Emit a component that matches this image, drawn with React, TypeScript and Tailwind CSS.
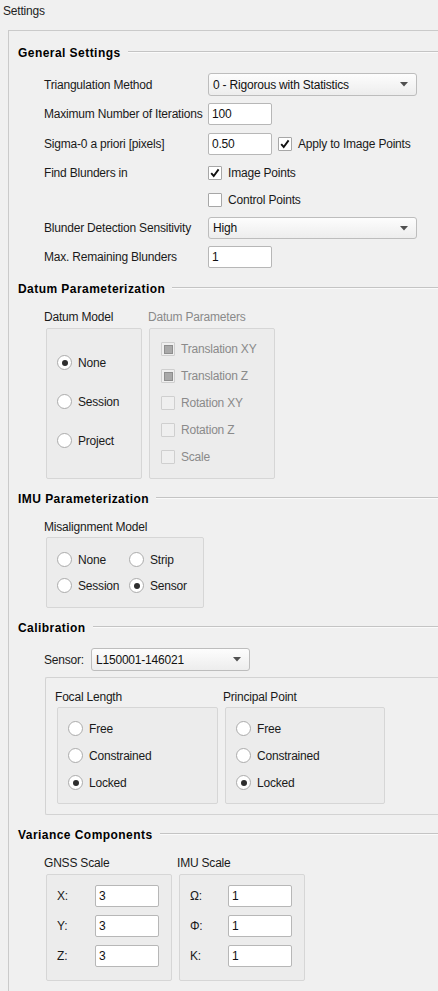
import React from "react";

const Header = ({ title, className = "" }: { title: string; className?: string }) => (
  <div className={`flex h-[16px] items-center gap-[7px] ${className}`}>
    <span className="text-[12px] font-bold tracking-[0.45px] text-black">{title}</span>
    <div className="mt-[-2px] h-[2px] flex-1 border-t border-b border-t-[#c4c4c4] border-b-[#fafafa]" />
  </div>
);

const Check = ({ checked = false, label, disabled = false, partial = false }: { checked?: boolean; label: string; disabled?: boolean; partial?: boolean }) => (
  <div className="flex h-[14px] items-center">
    <span
      className={`flex h-[14px] w-[14px] items-center justify-center rounded-[1px] border ${
        disabled ? "border-[#cfcfcf] bg-[#efefef]" : "border-[#a7a7a7] bg-white"
      }`}
    >
      {checked && (
        <svg width="12" height="12" viewBox="0 0 12 12">
          <path d="M2.2 6.2 L4.7 9 L9.6 2.4" fill="none" stroke="#111" strokeWidth="1.9" />
        </svg>
      )}
      {partial && <span className="h-[9px] w-[9px] border border-[#8e8e8e] bg-[#a9a9a9]" />}
    </span>
    <span className={`ml-[6px] whitespace-nowrap ${disabled ? "text-[#8a8a8a]" : "text-[#1a1a1a]"}`}>{label}</span>
  </div>
);

const Radio = ({ checked = false, label }: { checked?: boolean; label: string }) => (
  <div className="flex h-[15px] items-center">
    <span className="flex h-[15px] w-[15px] items-center justify-center rounded-full border border-[#ababab] bg-white">
      {checked && <span className="h-[6px] w-[6px] rounded-full bg-[#2e2e2e]" />}
    </span>
    <span className="ml-[6px] whitespace-nowrap text-[#1a1a1a]">{label}</span>
  </div>
);

const Field = ({ value, className = "w-[64px]" }: { value: string; className?: string }) => (
  <div className={`flex h-[22px] items-center rounded-[2px] border border-[#b7b7b7] bg-white px-[3px] text-[#111] ${className}`}>
    {value}
  </div>
);

const Combo = ({ value, className = "" }: { value: string; className?: string }) => (
  <div
    className={`flex h-[23px] items-center justify-between rounded-[3px] border border-[#bdbdbd] bg-gradient-to-b from-[#fdfdfd] to-[#ededed] pl-[4px] pr-[8px] text-[#111] ${className}`}
  >
    <span className="whitespace-nowrap">{value}</span>
    <svg width="8" height="5" viewBox="0 0 8 5">
      <path d="M0 0 H8 L4 4.5 Z" fill="#505050" />
    </svg>
  </div>
);

const Box = ({ className = "", children }: { className?: string; children: React.ReactNode }) => (
  <div className={`rounded-[2px] border border-[#d6d6d6] bg-[#ececec] ${className}`}>{children}</div>
);

const Row = ({ label, className = "", children }: { label: string; className?: string; children?: React.ReactNode }) => (
  <div className={`flex items-center ${className}`}>
    <span className="w-[164px] shrink-0 whitespace-nowrap text-[#1a1a1a]">{label}</span>
    {children}
  </div>
);

const ScaleRow = ({ label, value }: { label: string; value: string }) => (
  <div className="flex h-[22px] items-center">
    <span className="w-[38px] text-[#1a1a1a]">{label}</span>
    <Field value={value} />
  </div>
);

export default function App() {
  return (
    <div className="h-[991px] w-[438px] overflow-hidden bg-[#f0f0f0] font-['Liberation_Sans',Arial,sans-serif] text-[12px] leading-[16px] tracking-[-0.2px] text-black">
      <div className="flex h-[22px] items-center pl-[3px] text-[#222]">Settings</div>

      {/* outer frame, runs off the right and bottom edge */}
      <div className="ml-[8px] mt-[8px] h-[980px] w-[460px] border-l border-t border-[#cacaca] pl-[9px]">
        <Header title="General Settings" className="mt-[14px]" />
        <div className="pl-[26px]">
          <Row label="Triangulation Method" className="mt-[12px] h-[23px]">
            <Combo value="0 - Rigorous with Statistics" className="w-[209px]" />
          </Row>
          <Row label="Maximum Number of Iterations" className="mt-[7px] h-[22px]">
            <Field value="100" />
          </Row>
          <Row label="Sigma-0 a priori [pixels]" className="mt-[8px] h-[22px]">
            <Field value="0.50" />
            <div className="ml-[6px]">
              <Check checked label="Apply to Image Points" />
            </div>
          </Row>
          <Row label="Find Blunders in" className="mt-[7px] h-[22px]">
            <Check checked label="Image Points" />
          </Row>
          <Row label="" className="mt-[5px] h-[22px]">
            <Check label="Control Points" />
          </Row>
          <Row label="Blunder Detection Sensitivity" className="mt-[6px] h-[22px]">
            <Combo value="High" className="!h-[22px] w-[209px]" />
          </Row>
          <Row label="Max. Remaining Blunders" className="mt-[7px] h-[22px]">
            <Field value="1" />
          </Row>
        </div>

        <Header title="Datum Parameterization" className="mt-[13px]" />
        <div className="pl-[26px]">
          <div className="mt-[12px] flex h-[16px] items-center">
            <span className="w-[104px] text-[#1a1a1a]">Datum Model</span>
            <span className="text-[#8a8a8a]">Datum Parameters</span>
          </div>
          <div className="mt-[3px] flex h-[151px]">
            <Box className="ml-[2px] flex w-[96px] flex-col gap-[24px] pl-[10px] pt-[26px]">
              <Radio checked label="None" />
              <Radio label="Session" />
              <Radio label="Project" />
            </Box>
            <Box className="ml-[7px] flex w-[126px] flex-col gap-[13px] pl-[11px] pt-[13px]">
              <Check disabled partial label="Translation XY" />
              <Check disabled partial label="Translation Z" />
              <Check disabled label="Rotation XY" />
              <Check disabled label="Rotation Z" />
              <Check disabled label="Scale" />
            </Box>
          </div>
        </div>

        <Header title="IMU Parameterization" className="mt-[12px]" />
        <div className="pl-[26px]">
          <div className="mt-[12px] flex h-[16px] items-center text-[#1a1a1a]">Misalignment Model</div>
          <Box className="ml-[2px] mt-[2px] grid h-[71px] w-[158px] grid-cols-[72px_auto] content-start gap-y-[11px] pl-[10px] pt-[14px]">
            <Radio label="None" />
            <Radio label="Strip" />
            <Radio label="Session" />
            <Radio checked label="Sensor" />
          </Box>
        </div>

        <Header title="Calibration" className="mt-[12px]" />
        <div className="pl-[26px]">
          <div className="mt-[12px] flex h-[23px] items-center">
            <span className="w-[47px] text-[#1a1a1a]">Sensor:</span>
            <Combo value="L150001-146021" className="w-[159px]" />
          </div>
          <div className="ml-[1px] mt-[6px] h-[138px] w-[420px] rounded-l-[2px] border-y border-l border-[#d3d3d3] pl-[9px] pt-[11px]">
            <div className="flex">
              <div className="w-[168px]">
                <div className="flex h-[16px] items-center text-[#1a1a1a]">Focal Length</div>
                <Box className="ml-[2px] mt-[2px] flex h-[97px] w-[161px] flex-col gap-[12px] pl-[10px] pt-[13px]">
                  <Radio label="Free" />
                  <Radio label="Constrained" />
                  <Radio checked label="Locked" />
                </Box>
              </div>
              <div>
                <div className="flex h-[16px] items-center text-[#1a1a1a]">Principal Point</div>
                <Box className="ml-[2px] mt-[2px] flex h-[97px] w-[160px] flex-col gap-[12px] pl-[10px] pt-[13px]">
                  <Radio label="Free" />
                  <Radio label="Constrained" />
                  <Radio checked label="Locked" />
                </Box>
              </div>
            </div>
          </div>
        </div>

        <Header title="Variance Components" className="mt-[12px]" />
        <div className="pl-[26px]">
          <div className="mt-[12px] flex h-[16px] items-center text-[#1a1a1a]">
            <span className="w-[133px]">GNSS Scale</span>
            <span>IMU Scale</span>
          </div>
          <div className="mt-[3px] flex">
            <Box className="ml-[2px] flex h-[107px] w-[126px] flex-col gap-[8px] pl-[10px] pt-[10px]">
              <ScaleRow label="X:" value="3" />
              <ScaleRow label="Y:" value="3" />
              <ScaleRow label="Z:" value="3" />
            </Box>
            <Box className="ml-[7px] flex h-[107px] w-[126px] flex-col gap-[8px] pl-[10px] pt-[10px]">
              <ScaleRow label="Ω:" value="1" />
              <ScaleRow label="Φ:" value="1" />
              <ScaleRow label="K:" value="1" />
            </Box>
          </div>
        </div>
      </div>
    </div>
  );
}
